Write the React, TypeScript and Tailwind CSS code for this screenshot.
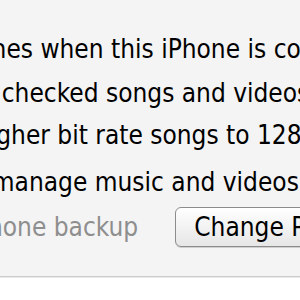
export default function App() {
  const font = { fontFamily: '"DejaVu Sans Condensed", "DejaVu Sans", sans-serif' };
  return (
    <div className="w-[300px] h-[300px] overflow-hidden bg-white" style={font}>
      <div className="h-[277px] bg-[#f4f4f4] border-b border-[#cdcdcd] shadow-[0_1px_0_#e8e8e8] overflow-hidden pt-[34px]">
        <div className="-ml-[121px] text-[26px] text-black whitespace-nowrap">
          <div className="ml-[11px] h-[30px] leading-[30px]">Open iTunes when this iPhone is connected</div>
          <div className="ml-[2px] mt-[14px] h-[30px] leading-[30px]">Sync only checked songs and videos</div>
          <div className="-ml-[4px] mt-[12px] h-[30px] leading-[30px]">Convert higher bit rate songs to 128 kbps AAC</div>
          <div className="mt-[17px] h-[30px] leading-[30px]">Manually manage music and videos</div>
          <div className="-ml-[9px] mt-[10px] h-[40px] flex items-center gap-[37px]">
            <span className="leading-[30px] text-[#8e8e8e]">Encrypt iPhone backup</span>
            <button className="h-[40px] px-[18px] rounded-[6px] border border-[#8c8c8c] bg-linear-to-b from-white to-[#e6e6e6] leading-[30px] text-black shadow-[0_1px_0_#cfcfcf]">
              Change Password…
            </button>
          </div>
        </div>
      </div>
    </div>
  );
}
